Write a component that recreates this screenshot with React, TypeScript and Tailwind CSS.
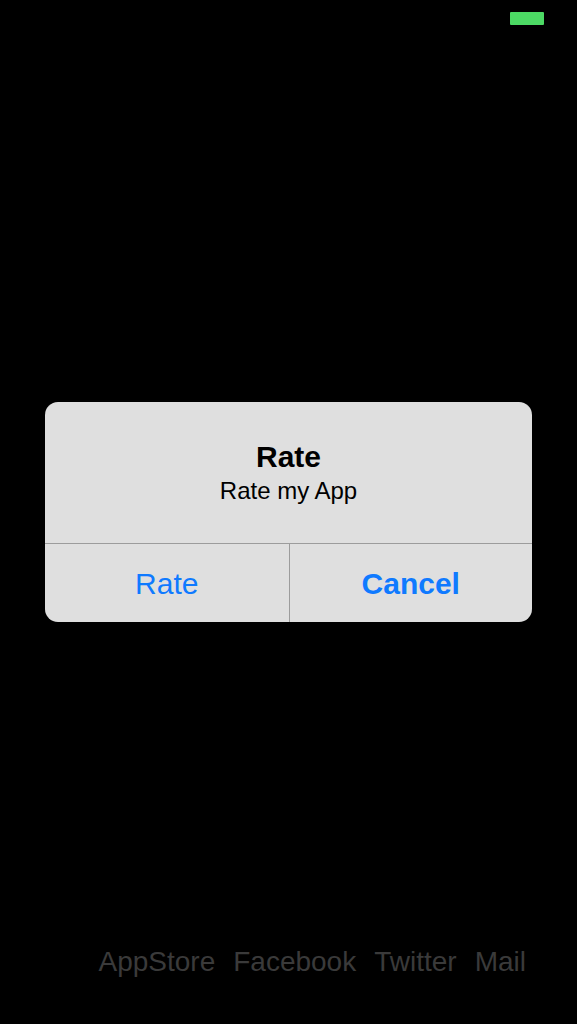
export default function App() {
  return (
    <div className="flex min-h-screen flex-col bg-black font-['Liberation_Sans',Arial,sans-serif]">
      <header className="flex h-24 flex-none justify-end px-[33px] pt-3">
        <div role="img" aria-label="Battery full" className="h-[13px] w-[34px] rounded-[1px] bg-[#4cd964]" />
      </header>
      <main className="flex flex-1 items-center justify-center px-[45px]">
        <div
          role="alertdialog"
          aria-labelledby="alert-title"
          aria-describedby="alert-message"
          className="w-full overflow-hidden rounded-[13px] bg-[#dfdfdf]"
        >
          <div className="flex h-[141px] flex-col items-center justify-center text-black">
            <h1 id="alert-title" className="text-[30px] leading-9 font-bold">Rate</h1>
            <p id="alert-message" className="text-[24px] leading-8">Rate my App</p>
          </div>
          <div className="grid h-[79px] grid-cols-2 border-t border-[#9c9c9c] text-[30px] text-[#0f7aff]">
            <button type="button">Rate</button>
            <button type="button" className="border-l border-[#9c9c9c] font-bold">Cancel</button>
          </div>
        </div>
      </main>
      <footer className="flex h-24 flex-none justify-end px-[51px] pt-4">
        <nav className="flex gap-[18px] text-[28px] leading-9 text-[#3a3a3a]">
          <a href="#appstore">AppStore</a>
          <a href="#facebook">Facebook</a>
          <a href="#twitter">Twitter</a>
          <a href="#mail">Mail</a>
        </nav>
      </footer>
    </div>
  );
}
